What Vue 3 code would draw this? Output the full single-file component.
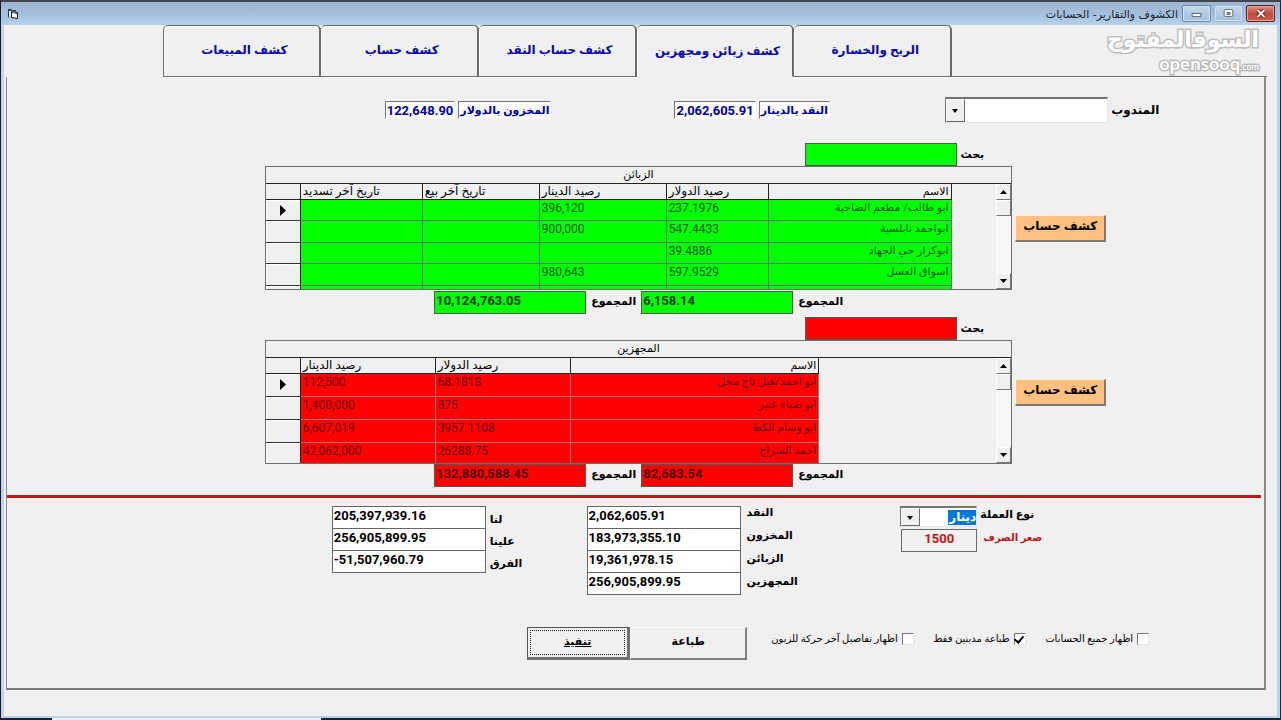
<script setup>
import { ref } from 'vue'

const tabs = [
  { id: 'sales', label: 'كشف المبيعات' },
  { id: 'account', label: 'كشف حساب' },
  { id: 'cash', label: 'كشف حساب النقد' },
  { id: 'parties', label: 'كشف زبائن ومجهزين' },
  { id: 'profit', label: 'الربح والخسارة' },
]
const activeTab = ref('parties')

const customers = [
  ['', '', '396,120', '237.1976', 'ابو طالب/ مطعم الضاحية'],
  ['', '', '900,000', '547.4433', 'ابواحمد نابلسية'],
  ['', '', '', '39.4886', 'ابوكرار حي الجهاد'],
  ['', '', '980,643', '597.9529', 'اسواق العسل'],
  ['', '', '', '', ''],
]
const suppliers = [
  ['112,500', '68.1818', 'ابو احمد/هيل تاج محل'],
  ['1,400,000', '875', 'ابو ضياء عنبر'],
  ['6,607,019', '3957.1108', 'ابو وسام الكط'],
  ['42,062,000', '26288.75', 'احمد السراج'],
]

const sections = [
  {
    id: 'customers',
    title: 'الزبائن',
    heads: ['تاريخ آخر تسديد', 'تاريخ آخر بيع', 'رصيد الدينار', 'رصيد الدولار', 'الاسم'],
    rows: customers,
    dollar: '6,158.14',
    dinar: '10,124,763.05',
  },
  {
    id: 'suppliers',
    title: 'المجهزين',
    heads: ['رصيد الدينار', 'رصيد الدولار', 'الاسم'],
    rows: suppliers,
    dollar: '82,683.54',
    dinar: '132,880,588.45',
  },
]

const balance = [
  { id: 'ours', label: 'لنا', value: '205,397,939.16' },
  { id: 'theirs', label: 'علينا', value: '256,905,899.95' },
  { id: 'diff', label: 'الفرق', value: '-51,507,960.79' },
]
const assets = [
  { id: 'a-cash', label: 'النقد', value: '2,062,605.91' },
  { id: 'a-stock', label: 'المخزون', value: '183,973,355.10' },
  { id: 'a-cust', label: 'الزبائن', value: '19,361,978.15' },
  { id: 'a-supp', label: 'المجهزين', value: '256,905,899.95' },
]

const options = ref([
  { id: 'last', label: 'اظهار تفاصيل آخر حركة للزبون', on: false },
  { id: 'debtors', label: 'طباعة مدينين فقط', on: true },
  { id: 'all', label: 'اظهار جميع الحسابات', on: false },
])
</script>

<template>
  <div class="window">
    <header class="titlebar">
      <svg class="app-icon" viewBox="0 0 14 12" aria-hidden="true">
        <path d="M1.500 9.500v-8h3l1 1h3v2" fill="#eef4f8" stroke="#2a3a44" />
        <path d="M2 2h3v1H2z" fill="#1d7f86" />
        <path d="M4.500 3.500l6 1v6l-6-1z" fill="#fff" stroke="#111" />
        <path d="M5 4l5 1v1l-5-1z" fill="#1d7f86" />
      </svg>
      <h1>الكشوف والتقارير- الحسابات</h1>
      <div class="win-buttons">
        <button class="win-btn" type="button" aria-label="تصغير">
          <svg viewBox="0 0 28 15"><rect x="9.5" y="7.5" width="9" height="3" fill="#fff" stroke="#5b6879" /></svg>
        </button>
        <button class="win-btn faint" type="button" aria-label="تكبير">
          <svg viewBox="0 0 28 15"><rect x="9.5" y="3.5" width="9" height="7" rx="1" fill="#fff" stroke="#5b6879" /><rect x="12.5" y="6.5" width="3" height="2" fill="#9db4cf" stroke="#5b6879" /></svg>
        </button>
        <button class="win-btn close" type="button" aria-label="اغلاق">
          <svg viewBox="0 0 28 15"><path d="M11 4l7 7M18 4l-7 7" stroke="#6b2a26" stroke-width="4" /><path d="M11 4l7 7M18 4l-7 7" stroke="#fff" stroke-width="2" /></svg>
        </button>
      </div>
    </header>

    <nav class="tabs" role="tablist">
      <span></span>
      <button
        v-for="t in tabs" :key="t.id" type="button" role="tab" class="tab"
        :class="{ active: activeTab === t.id }" :aria-selected="activeTab === t.id"
        @click="activeTab = t.id"
      >{{ t.label }}</button>
      <span class="tab-line"></span>
    </nav>

    <main class="panel">
      <div class="summary">
        <div class="pair stock">
          <output id="stock-usd" class="sunk">122,648.90</output>
          <label for="stock-usd" class="sunk">المخزون بالدولار</label>
        </div>
        <div class="pair cash">
          <output id="cash-iqd" class="sunk">2,062,605.91</output>
          <label for="cash-iqd" class="sunk">النقد بالدينار</label>
        </div>
        <div class="agent">
          <span class="combo wide"><select id="agent"><option></option></select></span>
          <label for="agent">المندوب</label>
        </div>
      </div>

      <section v-for="s in sections" :key="s.id" class="section" :class="s.id">
        <div class="search">
          <label :for="s.id + '-q'">بحث</label>
          <input :id="s.id + '-q'" class="tint" type="text" />
        </div>
        <div class="grid-box">
          <h2 :id="s.id + '-t'">{{ s.title }}</h2>
          <div class="grid-body">
            <table :aria-labelledby="s.id + '-t'">
              <colgroup>
                <col class="c-sel" />
                <col v-for="(h, i) in s.heads" :key="i" :class="'c' + i" />
              </colgroup>
              <thead>
                <tr><th></th><th v-for="h in s.heads" :key="h">{{ h }}</th></tr>
              </thead>
              <tbody>
                <tr v-for="(r, ri) in s.rows" :key="ri">
                  <th scope="row"><svg v-if="ri === 0" viewBox="0 0 6 11"><path d="M0 0l6 5.500l-6 5.500z" /></svg></th>
                  <td v-for="(c, ci) in r" :key="ci">{{ c }}</td>
                </tr>
              </tbody>
            </table>
            <div class="scroll">
              <button type="button" aria-label="اعلى"><svg viewBox="0 0 7 4"><path d="M0 4h7L3.500 0z" /></svg></button>
              <span class="thumb"></span>
              <button class="down" type="button" aria-label="اسفل"><svg viewBox="0 0 7 4"><path d="M0 0h7L3.500 4z" /></svg></button>
            </div>
          </div>
        </div>
        <button class="statement" type="button">كشف حساب</button>
        <div class="totals">
          <label :for="s.id + '-usd'">المجموع</label>
          <input :id="s.id + '-usd'" class="tint" type="text" readonly dir="ltr" :value="s.dollar" />
          <label :for="s.id + '-iqd'">المجموع</label>
          <input :id="s.id + '-iqd'" class="tint" type="text" readonly dir="ltr" :value="s.dinar" />
        </div>
      </section>

      <hr />

      <div class="figures">
        <div class="stack low">
          <div class="boxes"><input v-for="f in balance" :id="f.id" :key="f.id" type="text" readonly :value="f.value" /></div>
          <div class="names"><label v-for="f in balance" :key="f.id" :for="f.id">{{ f.label }}</label></div>
        </div>
        <div class="stack high">
          <div class="boxes"><input v-for="f in assets" :id="f.id" :key="f.id" type="text" readonly :value="f.value" /></div>
          <div class="names"><label v-for="f in assets" :key="f.id" :for="f.id">{{ f.label }}</label></div>
        </div>
        <div class="currency">
          <span class="combo marked"><select id="cur"><option>دينار</option></select></span>
          <label for="cur">نوع العملة</label>
          <input id="rate" type="text" value="1500" />
          <label for="rate" class="rate-name">صعر الصرف</label>
        </div>
      </div>

      <div class="actions">
        <button class="raised default" type="button"><span>تنفيذ</span></button>
        <button class="raised" type="button">طباعة</button>
        <div class="checks">
          <label v-for="o in options" :key="o.id" :for="o.id">
            <input :id="o.id" v-model="o.on" type="checkbox" />{{ o.label }}
          </label>
        </div>
      </div>
    </main>

    <footer class="frame-end"></footer>

    <div class="watermark">
      <span class="mark-ar">السوق<b>المفتوح</b></span>
      <span class="mark-en">opensooq<small>.com</small></span>
    </div>
  </div>
</template>

<style>
body { background: #f0f0f0; }
</style>

<style scoped>
* { box-sizing: border-box; }
.window {
  position: relative;
  display: flex;
  flex-direction: column;
  min-height: 100vh;
  background: #f0f0f0;
  border-left: 1px solid #1c1a22;
  border-right: 1px solid #123038;
  border-top: 2px solid #44444c;
  box-shadow: inset 3px 0 #c3d3ea, inset -3px 0 #b9d3ea;
  font: bold 13px/18px Roboto, "DejaVu Sans", sans-serif;
  color: #000;
}
button, input, select { font: inherit; color: inherit; margin: 0; border-radius: 0; }
label, h1, h2, button { white-space: nowrap; }
label { font-size: 11px; }

.titlebar {
  display: flex;
  align-items: center;
  height: 23px;
  padding: 0 5px 0 6px;
  background: linear-gradient(#9db3d2, #a7c2df 60%, #b5d1ec);
}
.app-icon { width: 14px; height: 12px; margin-right: auto; }
h1 { margin: 2px 4px 0 0; font: 11px/18px "DejaVu Sans", sans-serif; direction: rtl; color: #1a1f2a; }
.win-buttons { display: flex; gap: 3px; }
.win-btn {
  width: 29px; height: 17px; padding: 0;
  border: 1px solid #6f87a6; border-radius: 2px;
  background: linear-gradient(#c3d5ea, #a5bfdd);
  box-shadow: inset 0 0 0 1px #d5e3f2;
}
.win-btn svg { display: block; width: 100%; height: 15px; }
.win-btn.faint { border-color: #9db6d3; }
.win-btn.close { border-color: #5c2020; background: linear-gradient(#dd9388, #c04a3a 50%, #cc5c48); box-shadow: inset 0 0 0 1px #e0a79d; }

.tabs {
  display: grid;
  grid-template-columns: 156fr repeat(5, 158fr) 315fr;
  height: 52px;
  padding: 0 13px 0 6px;
}
.tab {
  padding: 0 0 2px 6px;
  font-size: 12px;
  border: 1px solid #6a6a6a;
  border-right-width: 2px;
  border-left: 0;
  border-top-left-radius: 5px;
  border-top-right-radius: 5px;
  background: #f0f0f0;
  color: #0a0aa8;
  box-shadow: inset 1px 1px #fff, 0 1px #fff;
  direction: rtl;
}
.tab:nth-child(2) { border-left: 1px solid #6a6a6a; }
.tab.active { padding-bottom: 0; border-bottom-color: #f0f0f0; box-shadow: inset 1px 1px #fff; }
.tab-line { border-bottom: 1px solid #6f6f6f; box-shadow: 0 1px #fff; }

.panel {
  flex: 1;
  margin: 0 14px 0 5px;
  border-left: 1px solid #8a8a8a;
  border-right: 2px solid #8a8a8a;
  border-bottom: 2px solid #7a7a7a;
  direction: ltr;
}

.summary {
  display: grid;
  grid-template-columns: 378fr 290fr 271fr 319fr;
  align-items: center;
  height: 66px;
  color: #00009c;
}
.pair { display: flex; gap: 3px; }
.pair.stock { grid-column: 2; }
.sunk {
  height: 18px;
  padding: 0 1px;
  line-height: 17px;
  background: #fcfcfc;
  border: 1px solid #fff;
  border-top-color: #777;
  border-left-color: #777;
}
.pair output { direction: ltr; }
.agent { display: flex; align-items: center; gap: 3px; color: #000; }
.agent label { font-size: 12px; }

.combo { position: relative; display: flex; width: 77px; height: 21px; }
.combo.wide { width: 163px; height: 26px; }
.combo select {
  appearance: none;
  width: 100%;
  padding: 0 2px 0 18px;
  direction: rtl;
  background: #fff;
  border: 1px solid #e3e3e3;
  border-top: 2px solid #747474;
  border-left: 1px solid #747474;
}
.combo::before {
  content: "";
  position: absolute;
  inset: 2px auto 1px 1px;
  width: 17px;
  background: #f0f0f0;
  border: 1px solid #fff;
  border-right-color: #6a6a6a;
  border-bottom-color: #6a6a6a;
  pointer-events: none;
}
.combo::after {
  content: "";
  position: absolute;
  left: 7px;
  top: calc(50% - 1px);
  border: 3px solid transparent;
  border-top: 4px solid #000;
  border-bottom: 0;
  pointer-events: none;
}
.combo.marked select {
  padding-right: 0;
  color: #fff;
  font-size: 12px;
  line-height: 16px;
  background: linear-gradient(#0078d7, #0078d7) no-repeat right 0 center / 28px 15px, #fff;
}

.section {
  display: grid;
  grid-template-columns: 258fr 748fr 252fr;
  grid-template-rows: 23px 124px 24px;
}
.section > .search, .section > .grid-box, .section > .totals { grid-column: 2; }
.section > .grid-box, .section > .statement { grid-row: 2; }
.customers { margin-bottom: 3px; }
.tint { border: 1px solid #4f5a4f; padding: 0 1px 4px; height: 23px; width: 152px; }
.customers .tint { background: #00ff00; color: #003a00; }
.suppliers .tint { background: #ff0000; color: #4a0000; }
.search { display: flex; align-items: center; gap: 3px; direction: rtl; padding-right: 28px; }
.search label { width: 24px; }
.totals { display: flex; align-items: flex-start; gap: 5px; direction: rtl; padding: 1px 169px 0 0; }
.totals label { width: 45px; line-height: 22px; }
.suppliers .totals { padding-top: 0; }

.grid-box {
  display: flex;
  flex-direction: column;
  overflow: hidden;
  border: 1px solid #6e6e6e;
  font-weight: normal;
  font-size: 12px;
}
.grid-box h2 {
  flex: none;
  height: 17px;
  margin: 0;
  font: 11px/16px "DejaVu Sans", sans-serif;
  text-align: center;
  border-bottom: 1px solid #222;
  direction: rtl;
}
.grid-body { display: flex; flex: 1; min-height: 0; justify-content: space-between; }
table { table-layout: fixed; border-collapse: separate; border-spacing: 0; width: 92%; height: min-content; }
.suppliers table { width: calc(100% * 554 / 746); }
.customers .c-sel { width: calc(100% * 35 / 686); }
.customers .c0 { width: calc(100% * 122 / 686); }
.customers .c1 { width: calc(100% * 117 / 686); }
.customers .c2 { width: calc(100% * 127 / 686); }
.customers .c3 { width: calc(100% * 102 / 686); }
.suppliers .c-sel { width: calc(100% * 35 / 554); }
.suppliers .c0, .suppliers .c1 { width: calc(100% * 135 / 554); }
th, td { overflow: hidden; padding: 0 2px; font-weight: normal; text-align: left; white-space: nowrap; vertical-align: top; }
thead th { height: 16px; line-height: 15px; border-right: 1px solid #222; border-bottom: 1px solid #222; }
thead th:last-child, td:last-child { font-size: 11px; text-align: right; direction: rtl; }
tbody th { background: #f0f0f0; border-right: 1px solid #222; border-bottom: 1px solid #333; box-shadow: inset 1px 1px #fff; text-align: center; }
tbody th svg { display: block; width: 6px; height: 11px; margin: 5px auto 0; }
td { line-height: 16px; }
.customers tbody tr { height: 21px; }
.customers tbody tr:nth-child(even) { height: 22px; }
.suppliers tbody tr { height: 23px; }
.customers td { background: #00ff00; color: #0b5a0b; border-right: 1px solid #5c7a5c; border-bottom: 1px solid #5c7a5c; }
.suppliers td { background: #ff0000; color: #6a0000; border-right: 1px solid #a87070; border-bottom: 1px solid #a87070; }

.scroll { display: flex; flex-direction: column; width: 15px; background: #f7f7f7; }
.scroll button, .thumb {
  flex: none;
  height: 16px;
  padding: 0;
  background: #f0f0f0;
  border: 1px solid #fff;
  border-right-color: #777;
  border-bottom-color: #777;
}
.scroll svg { display: block; width: 7px; height: 4px; margin: 0 auto; }
.scroll .down { margin-top: auto; }

.statement {
  grid-column: 3;
  align-self: center;
  justify-self: start;
  width: 91px;
  height: 27px;
  margin-left: 3px;
  padding: 0 0 3px;
  font-size: 12px;
  background: #ffc080;
  border: 1px solid #fff0e0;
  border-right: 2px solid #7a7a7a;
  border-bottom: 2px solid #7a7a7a;
  direction: rtl;
}
.suppliers .statement { margin-bottom: 20px; }

hr { height: 3px; margin: 7px 3px 0 0; border: 0; background: #c4161a; }

.figures {
  display: grid;
  grid-template-columns: 325fr 255fr 314fr 364fr;
  height: 129px;
  padding-top: 8px;
}
.stack { display: flex; gap: 4px; }
.stack.low { grid-column: 2; }
.stack.high { gap: 6px; }
.boxes { width: 154px; }
.boxes input {
  display: block;
  width: 100%;
  height: 22px;
  padding: 0 1px 4px;
  background: #fff;
  border: 1px solid #666;
  border-bottom: 0;
}
.boxes input:last-child { height: 23px; border-bottom: 1px solid #666; }
.names { display: flex; flex-direction: column; direction: rtl; text-align: left; align-items: flex-end; }
.names label { height: 22px; line-height: 22px; }
.low .names { padding-top: 3px; }
.high .names { margin-top: -4px; }
.high .names label { height: 23px; }
.currency { display: grid; grid-template-columns: 77px auto; gap: 2px 3px; align-content: start; justify-content: start; align-items: start; }
.currency #rate { width: 76px; height: 23px; margin-left: 1px; padding: 0 0 5px; text-align: center; color: #c0161a; background: #f0f0f0; border: 1px solid #6a6a6a; }
.currency .rate-name { color: #c0161a; padding-left: 3px; font-size: 10px; }

.actions { display: grid; grid-template-columns: 521fr 103px 117px 402px 115fr; align-items: start; padding-bottom: 28px; }
.raised {
  height: 33px;
  padding: 0 0 2px;
  font-size: 11px;
  background: #f0f0f0;
  border: 1px solid #fff;
  border-right: 2px solid #808080;
  border-bottom: 2px solid #808080;
}
.raised.default { grid-column: 2; padding: 2px; border: 1px solid #555; border-right: 3px solid #707070; border-bottom: 3px solid #707070; }
.default span { display: block; height: 25px; line-height: 22px; border: 1px dotted #222; text-decoration: underline; text-decoration-thickness: 1px; }
.checks { display: flex; justify-content: space-between; padding: 3px 0 0 24px; }
.checks label { display: flex; align-items: center; gap: 4px; direction: rtl; font-size: 10px; font-weight: normal; }
.checks input {
  appearance: none;
  width: 12px;
  height: 12px;
  background: #fff;
  border: 1px solid #e6e6e6;
  border-top-color: #777;
  border-left-color: #777;
}
.checks input:checked::after {
  content: "";
  display: block;
  width: 4px;
  height: 7px;
  margin: 0 3px;
  border: solid #000;
  border-width: 0 2px 2px 0;
  transform: rotate(40deg);
}

.frame-end {
  height: 30px;
  background:
    linear-gradient(90deg, #15262c 4%, #eef1f4 4% 25%, #15262c 25%) bottom / 100% 2px no-repeat,
    linear-gradient(#b9d3ea, #b9d3ea) bottom / 100% 4px no-repeat;
}

.watermark {
  position: absolute;
  top: 22px;
  right: 21px;
  display: flex;
  flex-direction: column;
  align-items: flex-end;
  color: #fff;
  pointer-events: none;
  -webkit-text-stroke: 3px #bdbdbd;
  paint-order: stroke fill;
}
.mark-ar { font: bold 22px/32px "DejaVu Sans", sans-serif; direction: rtl; }
.mark-en { font: 600 17px/16px "Open Sans", sans-serif; }
.mark-en small { font-size: 8px; }
</style>
